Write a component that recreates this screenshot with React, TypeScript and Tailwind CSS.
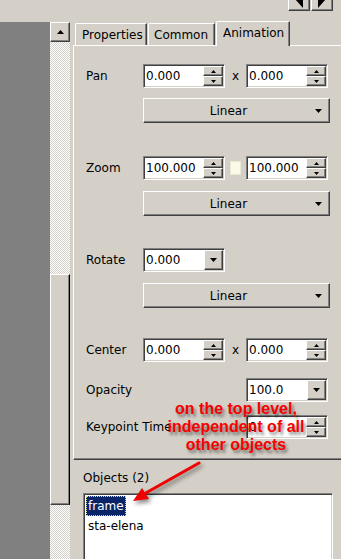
import React from "react";

const raised =
  "border border-t-white border-l-white border-r-[#404040] border-b-[#404040] shadow-[inset_-1px_-1px_#808080]";
const sunken =
  "border border-t-[#808080] border-l-[#808080] border-r-white border-b-white shadow-[inset_1px_1px_#404040,inset_-1px_-1px_#d4d0c8]";

const Down = ({ w = 7, h = 4 }: { w?: number; h?: number }) => (
  <svg width={w} height={h} viewBox={`0 0 ${w} ${h}`}>
    <polygon points={`0,0 ${w},0 ${w / 2},${h}`} fill="#000" />
  </svg>
);

const Up = ({ w = 7, h = 4 }: { w?: number; h?: number }) => (
  <svg width={w} height={h} viewBox={`0 0 ${w} ${h}`}>
    <polygon points={`0,${h} ${w},${h} ${w / 2},0`} fill="#000" />
  </svg>
);

const SpinBox = ({ value }: { value: string }) => (
  <div className={`flex h-[24px] w-[82px] shrink-0 bg-white p-[1px] ${sunken}`}>
    <div className="flex flex-1 items-center pl-[1px]">{value}</div>
    <div className="flex w-[20px] flex-col">
      <div className={`flex flex-1 items-center justify-center bg-[#d4d0c8] ${raised}`}>
        <Up w={5} h={3} />
      </div>
      <div className={`flex flex-1 items-center justify-center bg-[#d4d0c8] ${raised}`}>
        <Down w={5} h={3} />
      </div>
    </div>
  </div>
);

const Combo = ({ value }: { value: string }) => (
  <div className={`flex h-[24px] w-[82px] shrink-0 bg-white p-[1px] ${sunken}`}>
    <div className="flex flex-1 items-center pl-[1px]">{value}</div>
    <div className={`flex w-[19px] items-center justify-center bg-[#d4d0c8] ${raised}`}>
      <Down />
    </div>
  </div>
);

const Linear = () => (
  <div className={`flex h-[25px] w-[187px] items-center bg-[#d4d0c8] ${raised}`}>
    <span className="flex-1 pl-[4px] text-center">Linear</span>
    <span className="flex w-[20px] justify-center pr-[2px]">
      <Down />
    </span>
  </div>
);

const Row = ({ label, children, className = "" }: { label: string; children?: React.ReactNode; className?: string }) => (
  <div className={`flex items-center ${className}`}>
    <span className="w-[57px] shrink-0 whitespace-nowrap">{label}</span>
    {children}
  </div>
);

const X = () => <span className="w-[21px] shrink-0 text-center">x</span>;

export default function App() {
  return (
    <div className="relative h-[559px] w-[341px] overflow-hidden bg-[#d4d0c8] font-['DejaVu_Sans',sans-serif] text-[12px] text-black">
      {/* top strip */}
      <div className="flex h-[22px] justify-end pr-[8px]">
        <div className="-mt-[11px] flex h-[22px] gap-[1px]">
          <div className={`flex h-[22px] w-[22px] items-end justify-center bg-[#d4d0c8] pb-[2px] ${raised}`}>
            <svg width="8" height="9" viewBox="0 0 8 9">
              <polygon points="0,0 8,0 8,9" fill="#000" />
            </svg>
          </div>
          <div className={`flex h-[22px] w-[22px] items-end justify-center bg-[#d4d0c8] pb-[2px] ${raised}`}>
            <svg width="8" height="9" viewBox="0 0 8 9">
              <polygon points="0,0 8,0 0,9" fill="#000" />
            </svg>
          </div>
        </div>
      </div>

      <div className="flex h-[537px]">
        <div className="w-[50px] shrink-0 bg-[#808080]" />

        {/* scrollbar */}
        <div className="flex w-[20px] shrink-0 flex-col bg-[repeating-conic-gradient(#ffffff_0%_25%,#d4d0c8_0%_50%)] bg-size-[2px_2px]">
          <div className={`flex h-[20px] shrink-0 items-center justify-center bg-[#d4d0c8] ${raised}`}>
            <Up />
          </div>
          <div className="h-[232px] shrink-0" />
          <div className={`h-[231px] shrink-0 bg-[#d4d0c8] ${raised} border-r-black`} />
        </div>

        {/* panel */}
        <div className="flex flex-1 flex-col">
          <div className="flex h-[23px] shrink-0 items-start gap-[1px] pl-[5px]">
            <div className="mt-[1px] flex h-[22px] w-[72px] items-center rounded-tl-[2px] border-t border-l border-r border-t-white border-l-white border-r-[#404040] pl-[6px] pt-[1px] shadow-[inset_-1px_0_#808080]">
              Properties
            </div>
            <div className="mt-[1px] flex h-[22px] w-[67px] items-center rounded-tl-[2px] border-t border-l border-r border-t-white border-l-white border-r-[#404040] pl-[5px] pt-[1px] shadow-[inset_-1px_0_#808080]">
              Common
            </div>
            <div className="relative z-10 -mt-[1px] flex h-[25px] w-[74px] items-center rounded-tl-[2px] border-t border-l border-r border-t-white border-l-white border-r-[#404040] bg-[#d4d0c8] pb-[2px] pl-[6px] shadow-[inset_-1px_0_#808080]">
              Animation
            </div>
          </div>

          <div className="ml-[3px] flex h-[415px] w-[290px] shrink-0 flex-col border-t border-l border-b border-t-white border-l-white border-b-[#404040] pl-[12px] pt-[18px] shadow-[inset_0_-1px_#808080]">
            <Row label="Pan">
              <SpinBox value="0.000" />
              <X />
              <SpinBox value="0.000" />
            </Row>
            <div className="ml-[57px] mt-[10px]">
              <Linear />
            </div>

            <Row label="Zoom" className="mt-[33px]">
              <SpinBox value="100.000" />
              <span className="flex w-[21px] shrink-0 justify-center">
                <span className="h-[14px] w-[11px] border border-[#ece8d8] bg-[#fcf9e6]" />
              </span>
              <SpinBox value="100.000" />
            </Row>
            <div className="ml-[57px] mt-[11px]">
              <Linear />
            </div>

            <Row label="Rotate" className="mt-[32px]">
              <Combo value="0.000" />
            </Row>
            <div className="ml-[57px] mt-[11px]">
              <Linear />
            </div>

            <Row label="Center" className="mt-[30px]">
              <SpinBox value="0.000" />
              <X />
              <SpinBox value="0.000" />
            </Row>

            <Row label="Opacity" className="mt-[16px]">
              <span className="w-[103px] shrink-0" />
              <Combo value="100.0" />
            </Row>

            <Row label="Keypoint Time" className="mt-[13px]">
              <span className="w-[103px] shrink-0" />
              <SpinBox value="0" />
            </Row>
          </div>

          <div className="shrink-0 pl-[13px] pt-[11px] leading-[14px]">Objects (2)</div>
          <div className={`ml-[13px] mt-[8px] h-[80px] w-[250px] shrink-0 bg-white p-[2px] ${sunken}`}>
            <div className="flex h-[20px] items-center">
              <span className="flex h-[20px] items-center bg-[#0a246a] px-[2px] text-white outline-1 -outline-offset-1 outline-dotted outline-[#d8d890]">
                frame
              </span>
            </div>
            <div className="flex h-[20px] items-center pl-[2px]">sta-elena</div>
          </div>
        </div>
      </div>

      {/* annotation */}
      <div className="absolute left-[150px] top-[400px] w-[172px] text-center font-['Liberation_Sans',Arial,sans-serif] text-[16px] font-bold leading-[18px] text-[#f80000] [text-shadow:2px_3px_3px_rgba(0,0,0,0.45)]">
        on the top level,
        <br />
        independent of all
        <br />
        other objects
      </div>
      <svg
        className="absolute left-[120px] top-[455px] [filter:drop-shadow(2px_3px_2px_rgba(0,0,0,0.45))]"
        width="90"
        height="60"
        viewBox="0 0 90 60"
      >
        <line x1="79" y1="8" x2="24" y2="39" stroke="#f00000" strokeWidth="3" strokeLinecap="round" />
        <polygon points="13,46 29,44 22,33" fill="#f00000" />
      </svg>
    </div>
  );
}
